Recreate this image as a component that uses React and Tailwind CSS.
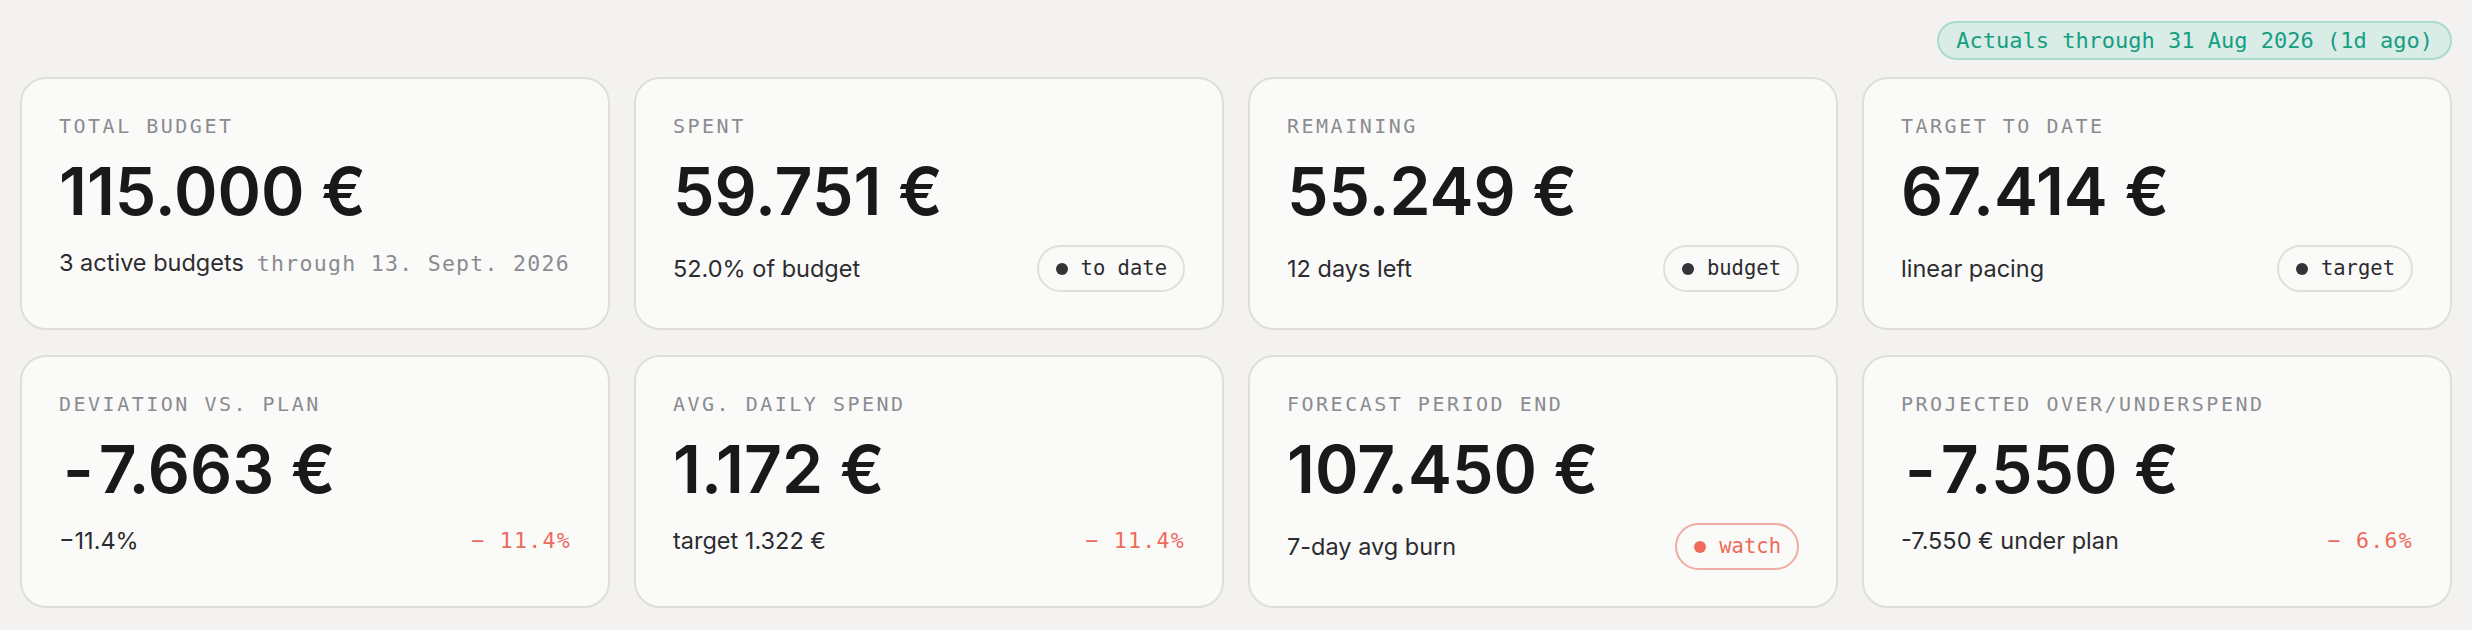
const cards = [
  {
    label: "TOTAL BUDGET",
    value: "115.000 €",
    sub: "3 active budgets",
    note: "through 13. Sept. 2026",
  },
  { label: "SPENT", value: "59.751 €", sub: "52.0% of budget", pill: { text: "to date" } },
  { label: "REMAINING", value: "55.249 €", sub: "12 days left", pill: { text: "budget" } },
  { label: "TARGET TO DATE", value: "67.414 €", sub: "linear pacing", pill: { text: "target" } },
  { label: "DEVIATION VS. PLAN", value: "-7.663 €", sub: "−11.4%", delta: "− 11.4%" },
  { label: "AVG. DAILY SPEND", value: "1.172 €", sub: "target 1.322 €", delta: "− 11.4%" },
  {
    label: "FORECAST PERIOD END",
    value: "107.450 €",
    sub: "7-day avg burn",
    pill: { text: "watch", warn: true },
  },
  {
    label: "PROJECTED OVER/UNDERSPEND",
    value: "-7.550 €",
    sub: "-7.550 € under plan",
    delta: "− 6.6%",
  },
];

function Pill({ text, warn }) {
  return (
    <span
      className={
        "flex h-[47px] items-center gap-[13px] rounded-full border-2 pl-[17px] pr-[16px] font-['DejaVu_Sans_Mono',monospace] text-[20.5px] leading-none " +
        (warn ? "border-[#f0aca2] text-[#ee6a5b]" : "border-[#e0dfdc] text-[#2c2c30]")
      }
    >
      <span
        className={
          "h-[12px] w-[12px] rounded-full " + (warn ? "bg-[#ef6b5e]" : "bg-[#333338]")
        }
      />
      {text}
    </span>
  );
}

// Big figure: a leading sign gets a little extra room on both sides.
function Figure({ value }) {
  const negative = value.startsWith("-");
  return (
    <div className="mt-[20px] font-['Inter',sans-serif] text-[66px] font-semibold leading-[66px] text-[#19191c]">
      {negative && <span className="ml-[4px] mr-[5px]">-</span>}
      {negative ? value.slice(1) : value}
    </div>
  );
}

function Card({ label, value, sub, note, pill, delta }) {
  return (
    <div className="flex flex-col rounded-[26px] border-2 border-[#dfdedb] bg-[#fafaf8] px-[37px] pt-[35px] pb-[36px]">
      <div className="font-['DejaVu_Sans_Mono',monospace] text-[20px] leading-[24px] tracking-[0.125em] text-[#8b8b91]">
        {label}
      </div>
      <Figure value={value} />
      <div className="mt-[21px] flex items-center justify-between">
        <div className="flex items-baseline gap-[13px]">
          <span className="font-['Inter',sans-serif] text-[23.5px] leading-[35px] text-[#2c2c30]">
            {sub}
          </span>
          {note && (
            <span className="font-['DejaVu_Sans_Mono',monospace] text-[21.5px] leading-[35px] tracking-[0.06em] text-[#8b8b91]">
              {note}
            </span>
          )}
        </div>
        {pill && <Pill {...pill} />}
        {delta && (
          <span className="font-['DejaVu_Sans_Mono',monospace] text-[21.5px] leading-[35px] tracking-[0.06em] text-[#ee6a5b]">
            {delta}
          </span>
        )}
      </div>
    </div>
  );
}

export default function App() {
  return (
    <div className="min-h-[630px] w-full bg-[#f3f2f0] px-[20px] pt-[21px] pb-[22px]">
      <div className="mb-[17px] flex justify-end">
        <span className="flex h-[39px] items-center rounded-full border-2 border-[#a9dccf] bg-[#d9ece5] px-[17px] font-['DejaVu_Sans_Mono',monospace] text-[22px] leading-none text-[#169e84]">
          Actuals through 31 Aug 2026 (1d ago)
        </span>
      </div>
      <div className="grid grid-cols-4 gap-x-[24px] gap-y-[25px]">
        {cards.map((c) => (
          <Card key={c.label} {...c} />
        ))}
      </div>
    </div>
  );
}
